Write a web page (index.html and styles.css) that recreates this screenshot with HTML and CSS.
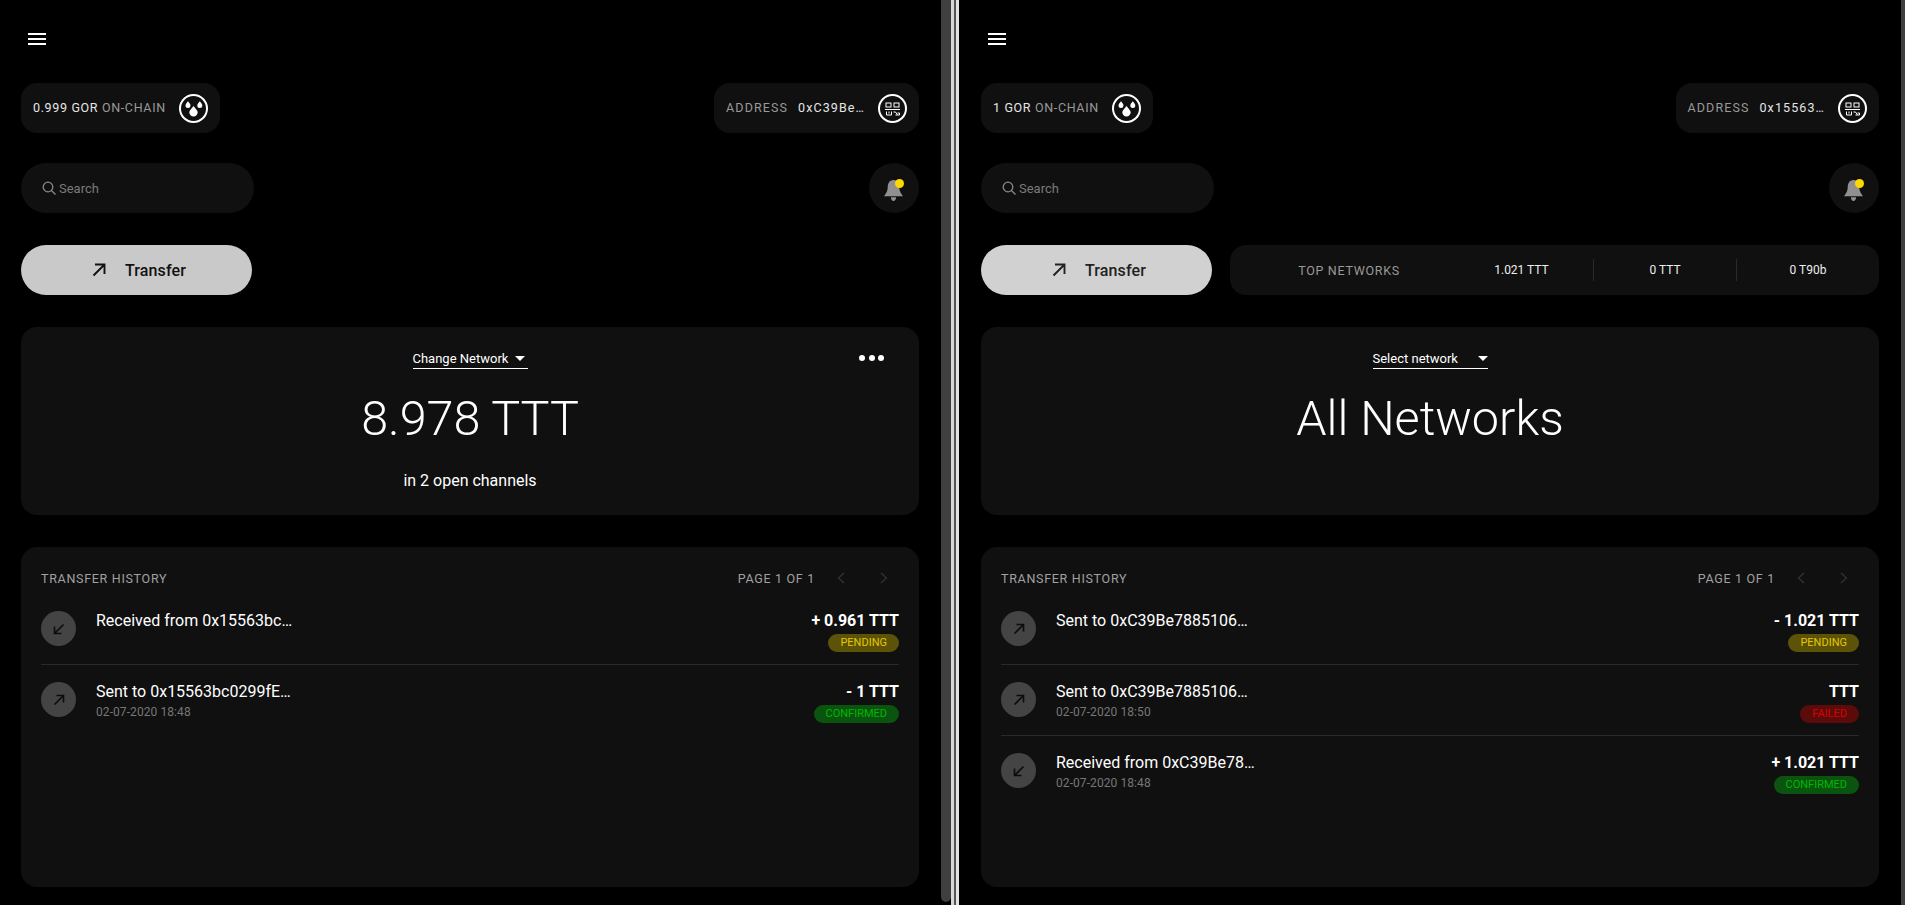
FILE: index.html
```html
<!DOCTYPE html>
<html lang="en">
<head>
    <meta charset="UTF-8">
    <title>Wallet</title>
    <link rel="stylesheet" href="styles.css">
</head>
<body>
    <div class="pane pane-first">
        <div class="menu"><span></span><span></span><span></span></div>
        <div class="row">
            <div class="pill">
                <span class="pill-text"><span class="value">0.999 GOR</span> <span class="label">ON-CHAIN</span></span>
                <svg class="round-icon" viewBox="0 0 29 29"><circle cx="14.5" cy="14.5" r="13.5" fill="none" stroke="#fff" stroke-width="2"/><path d="M14.5 12c2.300 2.900 4.200 4.700 4.200 6.300a4.200 4.200 0 0 1-8.400 0c0-1.600 1.900-3.400 4.200-6.300zM9 7.200c1.400 1.900 2.500 2.900 2.500 4.200a2.500 2.500 0 0 1-5 0c0-1.300 1.100-2.300 2.500-4.200zM20.800 7.200c1.400 1.900 2.500 2.900 2.500 4.200a2.500 2.500 0 0 1-5 0c0-1.300 1.100-2.300 2.500-4.200z" fill="#fff"/></svg>
            </div>
            <div class="pill">
                <span class="pill-text address"><span class="label">ADDRESS</span><span class="value">0xC39Be…</span></span>
                <svg class="round-icon" viewBox="0 0 29 29"><circle cx="14.500" cy="14.500" r="13.500" fill="none" stroke="#fff" stroke-width="2"/><g fill="none" stroke="#fff" stroke-width="1"><rect x="8" y="9" width="5" height="4"/><rect x="16" y="9" width="5" height="4"/><path d="M7 15.500h15M8.500 17.500v3.500h5v-3.500M11 17.500v2M15.500 18h2l2 3h-2M19.500 19h2v2h-2"/></g></svg>
            </div>
        </div>
        <div class="row row-tools">
            <div class="search">
                <svg class="search-icon" viewBox="0 0 14 14"><circle cx="6" cy="6" r="4.800" fill="none" stroke="#888" stroke-width="1.300"/><path d="M9.500 9.500l4 4" stroke="#888" stroke-width="1.300"/></svg>
                <span>Search</span>
            </div>
            <div class="bell">
                <svg viewBox="0 0 18 20"><path d="M9 0c4 0 5.500 3.500 5.500 7 0 3.500 1.500 5.500 3.500 8.500H0C2 12.500 3.500 10.500 3.500 7 3.500 3.500 5 0 9 0zM6.500 16.500h5c0 2-1 3.500-2.500 3.500s-2.500-1.500-2.500-3.500z" fill="#909090"/></svg>
                <span class="dot"></span>
            </div>
        </div>
        <div class="row row-left">
            <button class="transfer">
                <svg viewBox="0 0 14 14"><path d="M1.500 12.500L12 2M3 1.500h9.500V11" fill="none" stroke="#111" stroke-width="1.900"/></svg>
                <span>Transfer</span>
            </button>
        </div>
        <div class="card network-card">
            <div class="dropdown"><span>Change Network</span><i class="caret"></i></div>
            <div class="dots"><span></span><span></span><span></span></div>
            <div class="big">8.978 TTT</div>
            <div class="sub">in 2 open channels</div>
        </div>
        <div class="card history">
            <div class="history-head">
                <span>TRANSFER HISTORY</span>
                <div class="pager">
                    <span>PAGE 1 OF 1</span>
                    <svg class="chev chev-prev" viewBox="0 0 8 12"><path d="M7 1L1.500 6 7 11" fill="none" stroke="#333" stroke-width="1.300"/></svg>
                    <svg class="chev" viewBox="0 0 8 12"><path d="M1 1l5.500 5L1 11" fill="none" stroke="#333" stroke-width="1.300"/></svg>
                </div>
            </div>
            <div class="tx">
                <div class="tx-icon"><svg viewBox="0 0 12 12"><path d="M10.500 1.500L1.500 10.500M1.500 3.500v7h7" fill="none" stroke="#0c0c0c" stroke-width="1.600"/></svg></div>
                <div class="tx-main"><div class="tx-title">Received from 0x15563bc…</div></div>
                <div class="tx-side"><div class="amount">+ 0.961 TTT</div><span class="badge pending">PENDING</span></div>
            </div>
            <div class="tx">
                <div class="tx-icon"><svg viewBox="0 0 12 12"><path d="M1.500 10.500L10.500 1.500M3.500 1.500h7v7" fill="none" stroke="#0c0c0c" stroke-width="1.600"/></svg></div>
                <div class="tx-main"><div class="tx-title">Sent to 0x15563bc0299fE…</div><div class="tx-date">02-07-2020 18:48</div></div>
                <div class="tx-side"><div class="amount">- 1 TTT</div><span class="badge confirmed">CONFIRMED</span></div>
            </div>
        </div>
    </div>
    <div class="scrollbar"></div>
    <div class="split"></div>
    <div class="pane pane-second">
        <div class="menu"><span></span><span></span><span></span></div>
        <div class="row">
            <div class="pill">
                <span class="pill-text"><span class="value">1 GOR</span> <span class="label">ON-CHAIN</span></span>
                <svg class="round-icon" viewBox="0 0 29 29"><circle cx="14.5" cy="14.5" r="13.5" fill="none" stroke="#fff" stroke-width="2"/><path d="M14.5 12c2.300 2.900 4.200 4.700 4.200 6.300a4.200 4.200 0 0 1-8.400 0c0-1.600 1.900-3.400 4.200-6.300zM9 7.200c1.400 1.900 2.500 2.900 2.500 4.200a2.500 2.500 0 0 1-5 0c0-1.300 1.100-2.300 2.500-4.200zM20.800 7.200c1.400 1.900 2.500 2.900 2.500 4.200a2.500 2.500 0 0 1-5 0c0-1.300 1.100-2.300 2.500-4.200z" fill="#fff"/></svg>
            </div>
            <div class="pill">
                <span class="pill-text address"><span class="label">ADDRESS</span><span class="value">0x15563…</span></span>
                <svg class="round-icon" viewBox="0 0 29 29"><circle cx="14.500" cy="14.500" r="13.500" fill="none" stroke="#fff" stroke-width="2"/><g fill="none" stroke="#fff" stroke-width="1"><rect x="8" y="9" width="5" height="4"/><rect x="16" y="9" width="5" height="4"/><path d="M7 15.500h15M8.500 17.500v3.500h5v-3.500M11 17.500v2M15.500 18h2l2 3h-2M19.500 19h2v2h-2"/></g></svg>
            </div>
        </div>
        <div class="row row-tools">
            <div class="search">
                <svg class="search-icon" viewBox="0 0 14 14"><circle cx="6" cy="6" r="4.800" fill="none" stroke="#888" stroke-width="1.300"/><path d="M9.500 9.500l4 4" stroke="#888" stroke-width="1.300"/></svg>
                <span>Search</span>
            </div>
            <div class="bell">
                <svg viewBox="0 0 18 20"><path d="M9 0c4 0 5.500 3.500 5.500 7 0 3.500 1.500 5.500 3.500 8.500H0C2 12.500 3.500 10.500 3.500 7 3.500 3.500 5 0 9 0zM6.500 16.500h5c0 2-1 3.500-2.500 3.500s-2.500-1.500-2.500-3.500z" fill="#909090"/></svg>
                <span class="dot"></span>
            </div>
        </div>
        <div class="row row-left">
            <button class="transfer transfer-light">
                <svg viewBox="0 0 14 14"><path d="M1.500 12.500L12 2M3 1.500h9.500V11" fill="none" stroke="#222" stroke-width="1.900"/></svg>
                <span>Transfer</span>
            </button>
            <div class="top-networks">
                <div class="top-label">TOP NETWORKS</div>
                <div class="top-item">1.021 TTT</div>
                <div class="top-item top-line">0 TTT</div>
                <div class="top-item top-line">0 T90b</div>
            </div>
        </div>
        <div class="card network-card">
            <div class="dropdown dropdown-wide"><span>Select network</span><i class="caret"></i></div>
            <div class="big">All Networks</div>
        </div>
        <div class="card history">
            <div class="history-head">
                <span>TRANSFER HISTORY</span>
                <div class="pager">
                    <span>PAGE 1 OF 1</span>
                    <svg class="chev chev-prev" viewBox="0 0 8 12"><path d="M7 1L1.500 6 7 11" fill="none" stroke="#333" stroke-width="1.300"/></svg>
                    <svg class="chev" viewBox="0 0 8 12"><path d="M1 1l5.500 5L1 11" fill="none" stroke="#333" stroke-width="1.300"/></svg>
                </div>
            </div>
            <div class="tx">
                <div class="tx-icon"><svg viewBox="0 0 12 12"><path d="M1.500 10.500L10.500 1.500M3.500 1.500h7v7" fill="none" stroke="#0c0c0c" stroke-width="1.600"/></svg></div>
                <div class="tx-main"><div class="tx-title">Sent to 0xC39Be7885106…</div></div>
                <div class="tx-side"><div class="amount">- 1.021 TTT</div><span class="badge pending">PENDING</span></div>
            </div>
            <div class="tx">
                <div class="tx-icon"><svg viewBox="0 0 12 12"><path d="M1.500 10.500L10.500 1.500M3.500 1.500h7v7" fill="none" stroke="#0c0c0c" stroke-width="1.600"/></svg></div>
                <div class="tx-main"><div class="tx-title">Sent to 0xC39Be7885106…</div><div class="tx-date">02-07-2020 18:50</div></div>
                <div class="tx-side"><div class="amount">TTT</div><span class="badge failed">FAILED</span></div>
            </div>
            <div class="tx">
                <div class="tx-icon"><svg viewBox="0 0 12 12"><path d="M10.500 1.500L1.500 10.500M1.500 3.500v7h7" fill="none" stroke="#0c0c0c" stroke-width="1.600"/></svg></div>
                <div class="tx-main"><div class="tx-title">Received from 0xC39Be78…</div><div class="tx-date">02-07-2020 18:48</div></div>
                <div class="tx-side"><div class="amount">+ 1.021 TTT</div><span class="badge confirmed">CONFIRMED</span></div>
            </div>
        </div>
    </div>
    <div class="scrollbar scrollbar-end"></div>
</body>
</html>
```

FILE: styles.css
```css
html, body {
    height: 100%;
}

body {
    margin: 0;
    background-color: #000;
    color: #fff;
    font-family: Roboto, "Liberation Sans", sans-serif;
    display: flex;
    overflow: hidden;
}

.pane {
    padding: 33px 22px 0 22px;
    box-sizing: border-box;
    flex: none;
}

.pane-first {
    width: 941px;
    padding-left: 21px;
}

.pane-second {
    width: 942px;
}

.scrollbar {
    width: 10px;
    height: 902px;
    background-color: #3f3f3f;
    border-radius: 0 0 5px 5px;
    flex: none;
}

.scrollbar-end {
    width: 4px;
    height: 100%;
    border-radius: 0;
}

.split {
    width: 8px;
    flex: none;
    box-sizing: border-box;
    background-color: #555;
    border-left: 3px solid #d8d8d8;
    border-right: 3px solid #e4e4e8;
}

/* top bars */
.menu {
    width: 18px;
    height: 12px;
    margin-left: 7px;
    margin-bottom: 38px;
    display: flex;
    flex-direction: column;
    justify-content: space-between;
}

.menu span {
    height: 2px;
    background-color: #fff;
}

.row {
    display: flex;
    justify-content: space-between;
    align-items: center;
    margin-bottom: 30px;
}

.row-tools {
    margin-bottom: 32px;
}

.row-left {
    justify-content: flex-start;
    margin-bottom: 32px;
    gap: 18px;
}

.pill {
    height: 50px;
    padding: 0 12px;
    box-sizing: border-box;
    background-color: #101010;
    border-radius: 16px;
    display: flex;
    align-items: center;
    gap: 13px;
}

.pill-text {
    padding-bottom: 2px;
    font-size: 12.500px;
    letter-spacing: .65px;
    white-space: nowrap;
}

.address {
    display: flex;
    gap: 10px;
    letter-spacing: 1.100px;
}

.value {
    color: #e6e6e6;
}

.label {
    color: #999;
}

.round-icon {
    width: 29px;
    height: 29px;
    flex: none;
}

.search {
    width: 233px;
    height: 50px;
    padding-left: 21px;
    box-sizing: border-box;
    background-color: #101010;
    border-radius: 25px;
    display: flex;
    align-items: center;
    gap: 3px;
    color: #7a7a7a;
    font-size: 13px;
}

.search-icon {
    width: 14px;
    height: 14px;
}

.bell {
    width: 50px;
    height: 50px;
    border-radius: 50%;
    background-color: #101010;
    display: flex;
    justify-content: center;
    align-items: center;
    position: relative;
}

.bell svg {
    width: 19px;
    height: 21px;
    margin: 4px 2px 0 0;
}

.dot {
    position: absolute;
    top: 15.500px;
    right: 15.500px;
    width: 9px;
    height: 9px;
    border-radius: 50%;
    background-color: #ffd800;
}

.transfer {
    width: 231px;
    height: 50px;
    padding: 0 0 0 5px;
    border: 0;
    border-radius: 25px;
    background-color: #c9c9c9;
    color: #111;
    font-family: inherit;
    font-size: 16px;
    font-weight: 500;
    letter-spacing: .1px;
    display: flex;
    justify-content: center;
    align-items: center;
    gap: 19px;
    flex: none;
}

.transfer svg {
    width: 14px;
    height: 14px;
}

.transfer-light {
    background-color: #d1d1d1;
    color: #222;
}

.top-networks {
    flex: 1;
    height: 50px;
    background-color: #101010;
    border-radius: 16px;
    display: grid;
    grid-template-columns: 220px 143px 143px 143px;
    align-items: center;
    font-size: 12px;
    color: #eee;
}

.top-label {
    padding-left: 18px;
    text-align: center;
    font-size: 12.500px;
    color: #999;
    letter-spacing: .7px;
}

.top-item {
    height: 22px;
    line-height: 22px;
    text-align: center;
}

.top-line {
    border-left: 1px solid #2a2a2a;
}

/* cards */
.card {
    background-color: #101010;
    border-radius: 16px;
    margin-bottom: 32px;
    box-sizing: border-box;
}

.network-card {
    height: 188px;
    padding-top: 22px;
    text-align: center;
    position: relative;
}

.dropdown {
    width: 115px;
    height: 20px;
    margin: 0 auto;
    box-sizing: border-box;
    border-bottom: 1px solid #fff;
    display: flex;
    justify-content: space-between;
    align-items: center;
    font-size: 13px;
    line-height: 18px;
    padding-right: 3px;
}

.dropdown-wide {
    padding-right: 0;
}

.caret {
    width: 0;
    height: 0;
    border-left: 5px solid transparent;
    border-right: 5px solid transparent;
    border-top: 5px solid #fff;
}

.dots {
    position: absolute;
    top: 28px;
    right: 35px;
    display: flex;
    gap: 3.500px;
}

.dots span {
    width: 6px;
    height: 6px;
    border-radius: 50%;
    background-color: #fff;
}

.big {
    margin-top: 20px;
    font-size: 48.500px;
    font-weight: 300;
    line-height: 60px;
}

.sub {
    margin-top: 22px;
    font-size: 16px;
    line-height: 20px;
}

.history {
    height: 340px;
    padding: 21px 20px 0;
    margin-bottom: 0;
}

.history-head {
    display: flex;
    justify-content: space-between;
    align-items: center;
    height: 20px;
    margin-bottom: 6px;
    font-size: 12.500px;
    letter-spacing: .7px;
    color: #a0a0a0;
}

.pager {
    display: flex;
    align-items: center;
    margin-right: 11px;
}

.chev {
    width: 8px;
    height: 12px;
    margin-left: 35px;
}

.chev-prev {
    margin-left: 22px;
}

.tx {
    height: 71px;
    box-sizing: border-box;
    display: flex;
    align-items: flex-start;
    padding-top: 17px;
    border-bottom: 1px solid #2a2a2a;
}

.tx:last-child {
    border-bottom: 0;
}

.tx-icon {
    width: 35px;
    height: 35px;
    border-radius: 50%;
    background-color: #444;
    display: flex;
    justify-content: center;
    align-items: center;
    flex: none;
    margin-right: 20px;
}

.tx-icon svg {
    width: 12px;
    height: 12px;
}

.tx-main {
    flex: 1;
}

.tx-title {
    font-size: 16px;
    line-height: 20px;
}

.tx-date {
    margin-top: 2px;
    font-size: 12px;
    line-height: 16px;
    letter-spacing: .08px;
    color: #777;
}

.tx-side {
    display: flex;
    flex-direction: column;
    align-items: flex-end;
}

.amount {
    font-size: 16px;
    font-weight: 700;
    line-height: 20px;
}

.badge {
    margin-top: 3px;
    height: 18px;
    padding: 0 12px;
    border-radius: 9px;
    font-size: 11px;
    line-height: 18px;
}

.pending {
    background-color: #5c5208;
    color: #e6c800;
}

.confirmed {
    background-color: #0a5410;
    color: #00b800;
}

.failed {
    background-color: #5c0b0b;
    color: #d80000;
}
```
